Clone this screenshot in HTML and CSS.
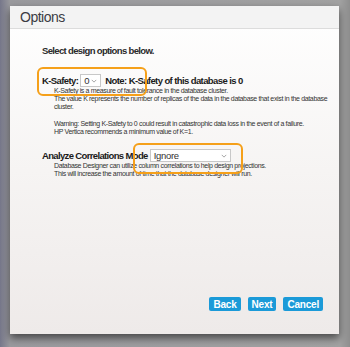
FILE: index.html
```html
<!DOCTYPE html>
<html lang="en">
<head>
    <meta charset="UTF-8">
    <title>Options</title>
    <link rel="stylesheet" href="styles.css">
</head>
<body>
    <div class="backdrop">
        <div class="dialog">
            <div class="dialog-title">Options</div>

            <div class="dialog-body">
                <p class="intro">Select design options below.</p>

                <div class="option-row">
                    <span class="option-label">K-Safety:</span>
                    <span class="select select-small">0
                        <svg class="chevron" viewBox="0 0 8 5"><path d="M1 1 L4 4 L7 1"/></svg>
                    </span>
                    <span class="option-label option-note">Note: K-Safety of this database is 0</span>
                    <span class="highlight highlight-ksafety"></span>
                </div>
                <div class="help">
                    <p>K-Safety is a measure of fault tolerance in the database cluster.<br>
                    The value K represents the number of replicas of the data in the database that exist in the database<br>
                    cluster.</p>
                    <p>Warning: Setting K-Safety to 0 could result in catastrophic data loss in the event of a failure.<br>
                    HP Vertica recommends a minimum value of K=1.</p>
                </div>

                <div class="option-row option-row-second">
                    <span class="option-label">Analyze Correlations Mode</span>
                    <span class="select select-wide">Ignore
                        <svg class="chevron" viewBox="0 0 8 5"><path d="M1 1 L4 4 L7 1"/></svg>
                    </span>
                    <span class="highlight highlight-correlations"></span>
                </div>
                <div class="help">
                    <p>Database Designer can utilize column correlations to help design projections.<br>
                    This will increase the amount of time that the database designer will run.</p>
                </div>
            </div>

            <div class="dialog-footer">
                <button class="btn">Back</button>
                <button class="btn">Next</button>
                <button class="btn">Cancel</button>
            </div>
        </div>
    </div>
</body>
</html>
```

FILE: styles.css
```css
body {
    margin: 0;
    font-family: 'Liberation Sans', Arial, sans-serif;
    background: #8c8c90;
}

.backdrop {
    height: 347px;
    padding: 6px 11px 0 10px;
    box-sizing: border-box;
    background: linear-gradient(90deg, #76778a 0, #9a9a9e 10px, #a2a2a2 340px, #8e8e8e 350px);
}

.dialog {
    width: 329px;
    height: 328px;
    display: flex;
    flex-direction: column;
    background: linear-gradient(180deg, #ffffff 0, #f6f4f3 50%, #eeeae9 100%);
    box-shadow: 0 4px 8px rgba(0,0,0,0.55);
}

.dialog-title {
    height: 22px;
    line-height: 22px;
    padding-left: 10px;
    font-size: 14px;
    letter-spacing: -0.5px;
    color: #3c3c44;
    background: #f3f3f3;
    border-bottom: 1px solid #dcdcdc;
}

.dialog-body {
    padding: 16px 0 0 32px;
    color: #1a1a1a;
}

.intro {
    margin: 0 0 17px;
    font-size: 9.5px;
    font-weight: bold;
    line-height: 12px;
    letter-spacing: -0.65px;
    color: #2a2a2a;
}

.option-row {
    position: relative;
    display: flex;
    align-items: center;
    gap: 2px;
    height: 13px;
}

.option-row-second {
    margin-top: 13px;
}

.option-label {
    font-size: 9.5px;
    font-weight: bold;
    letter-spacing: -0.6px;
}

.option-row-second .option-label {
    letter-spacing: -0.65px;
}

.option-note {
    margin-left: 2px;
}

.select {
    display: flex;
    align-items: center;
    justify-content: space-between;
    height: 13px;
    box-sizing: border-box;
    padding: 0 3px;
    font-size: 9.5px;
    letter-spacing: -0.3px;
    color: #333;
    background: white;
    border: 1px solid #c8c8c8;
}

.select-small {
    width: 21px;
}

.select-wide {
    width: 81px;
}

.chevron {
    width: 6px;
    height: 4px;
    fill: none;
    stroke: #888;
    stroke-width: 1;
}

.highlight {
    position: absolute;
    border: 2.5px solid #f5a01a;
    border-radius: 6px;
}

.highlight-ksafety {
    left: -5px;
    top: -7px;
    width: 106px;
    height: 25px;
}

.highlight-correlations {
    left: 91px;
    top: -6px;
    width: 106px;
    height: 27px;
}

.help {
    padding-left: 12px;
    font-size: 7px;
    line-height: 8.2px;
    letter-spacing: -0.35px;
    color: #333;
}

.help p {
    margin: 0 0 8.2px;
}

.help p:last-child {
    margin-bottom: 0;
}

.dialog-footer {
    margin-top: auto;
    display: flex;
    justify-content: flex-end;
    gap: 7px;
    padding: 0 16px 23px 0;
}

.btn {
    height: 14px;
    padding: 0 4px;
    border: none;
    border-radius: 2px;
    background: #1b9ad8;
    color: white;
    font-family: inherit;
    font-size: 10px;
    font-weight: bold;
    letter-spacing: -0.2px;
}
```
